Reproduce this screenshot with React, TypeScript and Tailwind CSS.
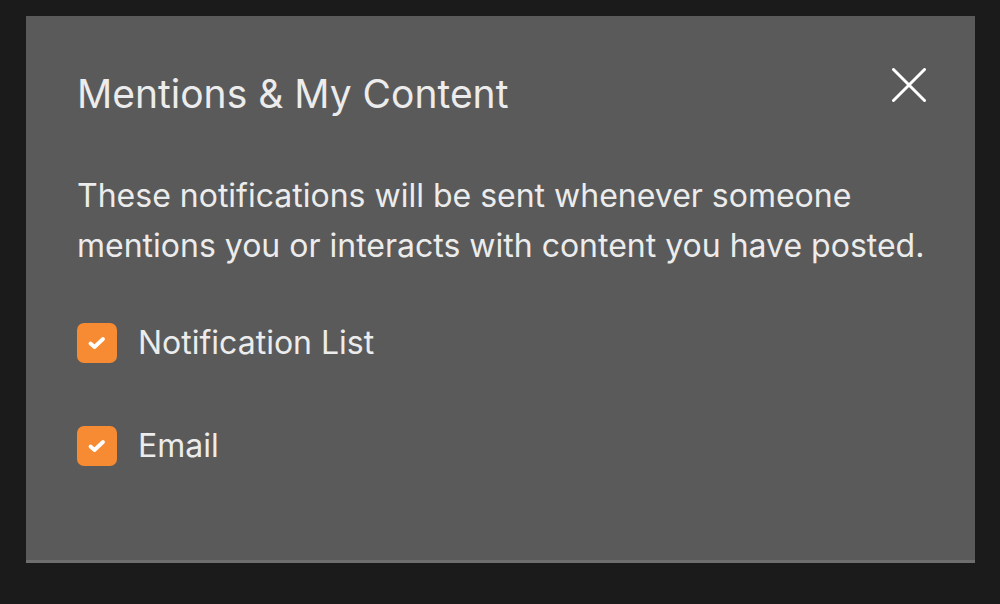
export default function App() {
  return (
    <div className="w-[1000px] h-[604px] bg-[#1b1b1b] pt-[16px] pl-[26px]" style={{ fontFamily: 'Inter, "Noto Sans", sans-serif' }}>
      <div className="w-[949px] h-[547px] bg-[#5a5a5a] border-b-[3px] border-[#6e6e6e] relative pl-[51px] pt-[58px] text-[#ececec]">
        <div className="text-[39px] leading-[40px] font-normal">Mentions &amp; My Content</div>
        <button className="absolute left-[866px] top-[52px] w-[34px] h-[34px]">
          <svg width="34" height="34" viewBox="0 0 34 34" fill="none" stroke="#ffffff" strokeWidth="3" strokeLinecap="round">
            <path d="M1.5 1.5L32.5 32.5M32.5 1.5L1.5 32.5" />
          </svg>
        </button>
        <p className="mt-[57px] text-[32px] leading-[50px]">
          These notifications will be sent whenever someone<br />mentions you or interacts with content you have posted.
        </p>
        <div className="mt-[52px] flex flex-col gap-[63px]">
          <label className="flex items-center gap-[21px]">
            <span className="w-[40px] h-[40px] rounded-[7px] bg-[#f68b33] flex items-center justify-center">
              <svg width="20" height="16" viewBox="0 0 20 16" fill="none" stroke="#ffffff" strokeWidth="3.8" strokeLinecap="round" strokeLinejoin="round">
                <path d="M3.5 8.5L7.5 12L16 4" />
              </svg>
            </span>
            <span className="text-[32px] leading-[40px]">Notification List</span>
          </label>
          <label className="flex items-center gap-[21px]">
            <span className="w-[40px] h-[40px] rounded-[7px] bg-[#f68b33] flex items-center justify-center">
              <svg width="20" height="16" viewBox="0 0 20 16" fill="none" stroke="#ffffff" strokeWidth="3.8" strokeLinecap="round" strokeLinejoin="round">
                <path d="M3.5 8.5L7.5 12L16 4" />
              </svg>
            </span>
            <span className="text-[32px] leading-[40px]">Email</span>
          </label>
        </div>
      </div>
    </div>
  );
}
